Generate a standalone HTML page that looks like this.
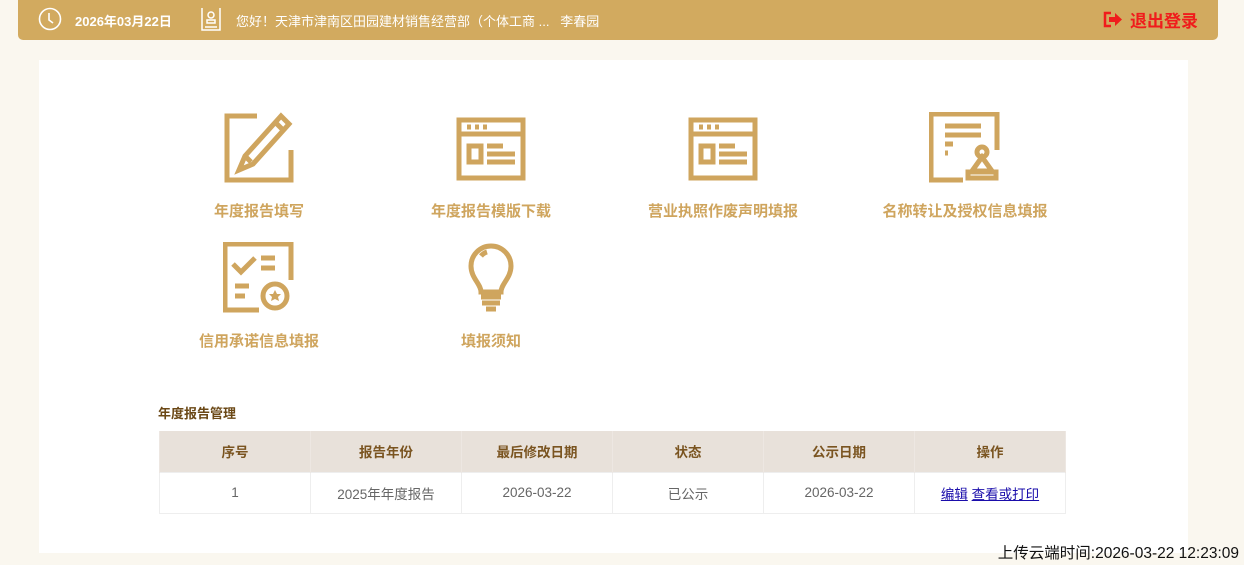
<!DOCTYPE html>
<html><head><meta charset="utf-8"><style>
*{margin:0;padding:0;box-sizing:border-box}
body{width:1244px;height:565px;background:#faf7ef;font-family:"Liberation Sans","Noto Sans CJK SC",sans-serif;position:relative;overflow:hidden}
.top{position:absolute;left:18px;top:0;width:1200px;height:40px;background:#d2aa5f;border-radius:0 0 5px 5px;color:#fff;font-size:13px}
.top span{position:absolute;top:11px}
.panel{position:absolute;left:39px;top:60px;width:1149px;height:493px;background:#fff}
.it{position:absolute;width:240px;text-align:center}
.it svg{display:block;margin:0 auto}
.it div{color:#cfa55e;font-weight:bold;font-size:15px;margin-top:16px}
.title{position:absolute;left:158px;top:403px;font-size:13px;font-weight:bold;color:#6b4816}
table{position:absolute;left:159px;top:431px;width:907px;border-collapse:collapse;font-size:13.5px;table-layout:fixed}
th{background:#e8e1da;color:#7a5420;height:41px;border:1px solid #ede7e2;border-width:0 1px;font-weight:bold}
td{height:41px;border:1px solid #eee;text-align:center;color:#666}
td a{color:#1a0dab;text-decoration:underline}
.foot{position:absolute;right:5px;top:541px;font-size:15.5px;color:#111}
</style></head><body>
<div class="top">
<svg style="position:absolute;left:20px;top:7px" width="24" height="24" viewBox="0 0 24 24" fill="none" stroke="#fff" stroke-width="1.6"><circle cx="12" cy="12" r="10.5"/><path d="M11 6v7l4 3"/></svg>
<span style="left:57px;font-weight:bold">2026年03月22日</span>
<svg style="position:absolute;left:183px;top:7px" width="20" height="24" viewBox="0 0 20 24" fill="none" stroke="#fff" stroke-width="1.5"><path d="M1 1v22h18V1"/><circle cx="10" cy="8" r="3"/><path d="M6 16h8v-3H6zM4 20h12"/></svg>
<span style="left:218px">您好！天津市津南区田园建材销售经营部（个体工商 ...&nbsp;&nbsp;&nbsp;李春园</span>
<svg style="position:absolute;left:1085px;top:11px" width="20" height="17" viewBox="0 0 20 17"><path d="M8 2H2v13h6" fill="none" stroke="#f01c1c" stroke-width="2.5"/><path d="M6 6h6V2l7 6.5-7 6.5v-4H6z" fill="#f01c1c"/></svg>
<span style="left:1112px;top:7px;color:#f01c1c;font-weight:bold;font-size:17px">退出登录</span>
</div>
<div class="panel"></div>
<div class="it" style="left:139px;top:112px"><svg width="72" height="72" viewBox="0 0 72 72" fill="none" stroke="#cfa55e" stroke-width="5"><path d="M34 4H4v64h64V38"/><path d="M58 4l8 8-36 40-14 6 6-14z"/><path d="M52 10l8 8M22 44l6 6"/></svg><div>年度报告填写</div></div>
<div class="it" style="left:371px;top:112px"><svg width="72" height="72" viewBox="0 0 72 72" fill="none" stroke="#cfa55e" stroke-width="5"><path d="M4 8h64v58H4zM4 22h64"/><path d="M12 15h4M20 15h4M28 15h4M14 34h12v16H14zM32 34h16M32 42h28M32 50h28"/></svg><div>年度报告模版下载</div></div>
<div class="it" style="left:603px;top:112px"><svg width="72" height="72" viewBox="0 0 72 72" fill="none" stroke="#cfa55e" stroke-width="5"><path d="M4 8h64v58H4zM4 22h64"/><path d="M12 15h4M20 15h4M28 15h4M14 34h12v16H14zM32 34h16M32 42h28M32 50h28"/></svg><div>营业执照作废声明填报</div></div>
<div class="it" style="left:845px;top:112px"><svg width="72" height="72" viewBox="0 0 72 72" fill="none" stroke="#cfa55e" stroke-width="5"><path d="M34 68H2V2h66v36"/><path d="M16 14h36M16 23h36M16 32h8M16 41h3"/><circle cx="53" cy="40" r="5"/><path d="M53 45l-10 14h20z M39 66h28v-6H39z"/></svg><div>名称转让及授权信息填报</div></div>
<div class="it" style="left:139px;top:242px"><svg width="72" height="72" viewBox="0 0 72 72" fill="none" stroke="#cfa55e" stroke-width="5"><path d="M36 68H2V2h66v36"/><path d="M10 22l8 8 14-14M38 16h14M38 26h14M12 44h14M12 54h10"/><circle cx="52" cy="54" r="12"/><path d="M52 48l2 4h4l-3 3 1 4-4-2-4 2 1-4-3-3h4z" fill="#cfa55e" stroke="none"/></svg><div>信用承诺信息填报</div></div>
<div class="it" style="left:371px;top:242px"><svg width="72" height="72" viewBox="0 0 72 72" fill="none" stroke="#cfa55e" stroke-width="5"><path d="M26 50c0-8-10-14-10-26a20 20 0 0140 0c0 12-10 18-10 26z"/><path d="M26 14a12 12 0 016-4M26 55h20M27 61h18M31 67h10"/></svg><div>填报须知</div></div>
<div class="title">年度报告管理</div>
<table><colgroup><col><col><col><col><col><col></colgroup><tr><th>序号</th><th>报告年份</th><th>最后修改日期</th><th>状态</th><th>公示日期</th><th>操作</th></tr>
<tr><td>1</td><td>2025年年度报告</td><td>2026-03-22</td><td>已公示</td><td>2026-03-22</td><td><a>编辑</a> <a>查看或打印</a></td></tr></table>
<div class="foot">上传云端时间:2026-03-22 12:23:09</div>
</body></html>
